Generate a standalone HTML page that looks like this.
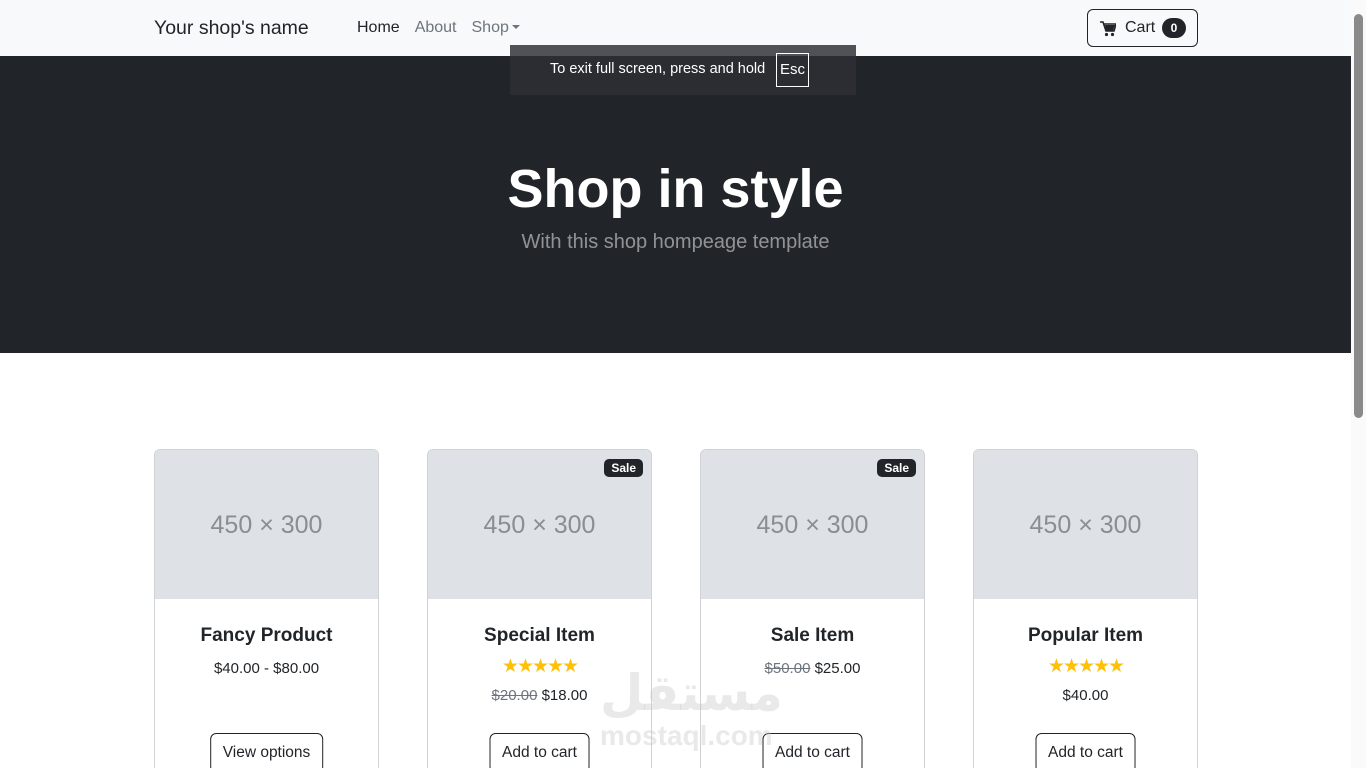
<!DOCTYPE html>
<html><head><meta charset="utf-8"><style>
*{box-sizing:border-box;margin:0;padding:0}
html,body{width:1366px;height:768px;overflow:hidden}
body{background:#fff;font-family:"Segoe UI","Liberation Sans",sans-serif;color:#212529;position:relative}
.nav{position:absolute;left:0;top:0;width:1351px;height:56px;background:#f8f9fa}
.brand{position:absolute;left:154px;top:17px;font-size:19.5px;color:#212529}
.links{position:absolute;left:357px;top:19px;font-size:16px}
.links span{margin-right:15px;color:#6c757d}
.links span.a{color:#212529}
.caret{display:inline-block;border-left:4px solid transparent;border-right:4px solid transparent;border-top:4px solid #6c757d;vertical-align:3px;margin-left:3px}
.cart{position:absolute;left:1087px;top:9px;width:111px;height:38px;border:1px solid #212529;border-radius:6px;font-size:16px}
.cart .t{position:absolute;left:37px;top:9px}
.badge0{position:absolute;left:74px;top:8px;width:24px;height:20px;border-radius:10px;background:#212529;color:#fff;font-size:12px;font-weight:bold;text-align:center;line-height:20px}
.hero{position:absolute;left:0;top:56px;width:1351px;height:297px;background:#212529;text-align:center}
.hero h1{position:absolute;width:100%;top:100px;font-size:54px;font-weight:bold;color:#fff;line-height:66px}
.hero p{position:absolute;width:100%;top:175px;font-size:20px;color:rgba(255,255,255,.5)}
.fs{position:absolute;left:510px;top:45px;width:346px;height:50px;background:#2b2d33;color:#fff;font-size:15px}
.fs .top{position:absolute;left:0;top:0;width:346px;height:11px;background:#505257}
.fs .m{position:absolute;left:40px;top:16px;font-size:14.5px}
.fs .esc{position:absolute;left:266px;top:8px;width:33px;height:34px;border:1px solid #fff;text-align:center;line-height:32px}
.card{position:absolute;top:449px;width:225px;height:330px;border:1px solid #d0d2d5;border-radius:6px;overflow:hidden;text-align:center}
.img{height:149px;background:#dee2e6;color:#8a8e93;font-size:25px;line-height:150px}
.name{margin-top:24px;font-size:19px;font-weight:bold;line-height:26px}
.price{font-size:15px;margin-top:9px;line-height:22px}
.stars{color:#ffc107;font-size:19px;letter-spacing:-2px;margin-top:5px;height:28px;line-height:26px}
s{color:#6c757d}
.btn{position:absolute;top:283px;left:50%;transform:translateX(-50%);border:1px solid #212529;border-radius:6px;height:40px;padding:0 12px;font-size:15.5px;line-height:38px;white-space:nowrap}
.sale{position:absolute;top:9px;right:8px;background:#212529;color:#fff;font-size:12px;font-weight:bold;border-radius:5px;padding:2px 7px}
.sb{position:absolute;left:1351px;top:0;width:15px;height:768px;background:#fafafa}
.th{position:absolute;left:3px;top:14px;width:9px;height:404px;border-radius:5px;background:#8a8a8a}
.wm1{position:absolute;left:600px;top:664px;font-size:50px;font-weight:bold;color:rgba(200,200,200,.4);font-family:"Liberation Sans","DejaVu Sans",sans-serif}
.wm2{position:absolute;left:600px;top:720px;font-size:28px;font-weight:bold;color:rgba(200,200,200,.4);font-family:"Liberation Sans",sans-serif}
</style></head><body>
<div class="nav">
<div class="brand">Your shop's name</div>
<div class="links"><span class="a">Home</span><span>About</span><span>Shop<i class="caret"></i></span></div>
<div class="cart"><svg style="position:absolute;left:12px;top:11px" width="16" height="16" viewBox="0 0 16 16"><path d="M0 1h3l3 9h8l2-7H4" fill="none" stroke="#212529" stroke-width="1.6"/><path d="M5 4h10l-2 6H6z" fill="#212529"/><circle cx="6.5" cy="13.5" r="1.6" fill="#212529"/><circle cx="12.5" cy="13.5" r="1.6" fill="#212529"/></svg><span class="t">Cart</span><span class="badge0">0</span></div>
</div>
<div class="hero"><h1>Shop in style</h1><p>With this shop hompeage template</p></div>
<div class="fs"><div class="top"></div><span class="m">To exit full screen, press and hold</span><span class="esc">Esc</span></div>

<div class="card" style="left:154px"><div class="img">450 × 300</div><div class="name">Fancy Product</div><div class="price">$40.00 - $80.00</div><div class="btn">View options</div></div>
<div class="card" style="left:427px"><div class="sale">Sale</div><div class="img">450 × 300</div><div class="name">Special Item</div><div class="stars">★★★★★</div><div class="price" style="margin-top:3px"><s>$20.00</s> $18.00</div><div class="btn">Add to cart</div></div>
<div class="card" style="left:700px"><div class="sale">Sale</div><div class="img">450 × 300</div><div class="name">Sale Item</div><div class="price"><s>$50.00</s> $25.00</div><div class="btn">Add to cart</div></div>
<div class="card" style="left:973px"><div class="img">450 × 300</div><div class="name">Popular Item</div><div class="stars">★★★★★</div><div class="price" style="margin-top:3px">$40.00</div><div class="btn">Add to cart</div></div>

<div class="wm1">مستقل</div>
<div class="wm2">mostaql.com</div>
<div class="sb"><div class="th"></div></div>
</body></html>
